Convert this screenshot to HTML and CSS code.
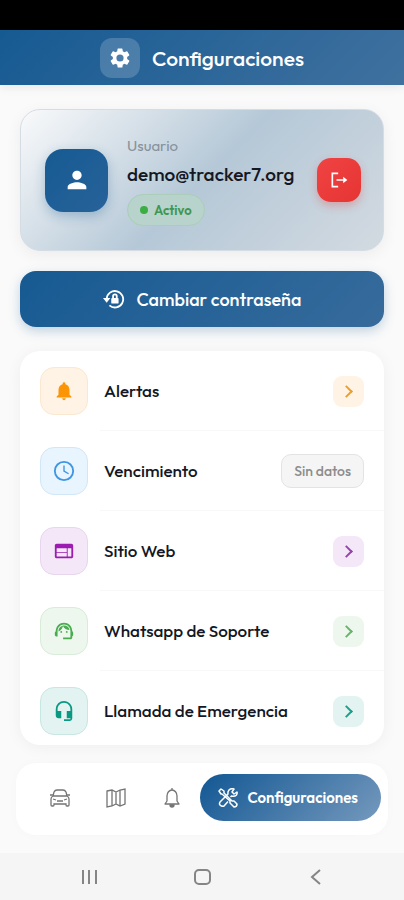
FILE: index.html
```html
<!DOCTYPE html>
<html lang="es">

<head>
    <title>Configuraciones</title>
    <meta charset="UTF-8">
    <meta name="viewport" content="width=device-width, initial-scale=1">
    <link rel="stylesheet" href="styles.css">
</head>

<body>
    <div class="status-bar"></div>

    <header class="header">
        <span class="header-icon">
            <svg width="24" height="24" viewBox="0 0 24 24" fill="currentColor"><path d="M19.14 12.94c.04-.3.06-.61.06-.94s-.02-.64-.07-.94l2.03-1.58a.5.5 0 0 0 .12-.61l-1.92-3.32a.5.5 0 0 0-.59-.22l-2.39.96a7 7 0 0 0-1.62-.94l-.36-2.54a.5.5 0 0 0-.48-.41h-3.84a.5.5 0 0 0-.47.41l-.36 2.54c-.59.24-1.13.57-1.62.94l-2.39-.96a.5.5 0 0 0-.59.22L2.74 8.87a.5.5 0 0 0 .12.61l2.03 1.58a6 6 0 0 0 0 1.88l-2.03 1.58a.5.5 0 0 0-.12.61l1.92 3.32c.12.22.37.29.59.22l2.39-.96c.5.38 1.03.7 1.62.94l.36 2.54c.05.24.24.41.48.41h3.84c.24 0 .44-.17.47-.41l.36-2.54c.59-.24 1.13-.56 1.62-.94l2.39.96c.22.08.47 0 .59-.22l1.92-3.32a.5.5 0 0 0-.12-.61zM12 15.6a3.6 3.6 0 1 1 0-7.2 3.6 3.6 0 0 1 0 7.2z"/></svg>
        </span>
        <h1>Configuraciones</h1>
    </header>

    <main class="content">
        <section class="profile">
            <div class="avatar">
                <svg width="32" height="32" viewBox="0 0 24 24" fill="currentColor"><path d="M12 12c2.21 0 4-1.79 4-4s-1.79-4-4-4-4 1.79-4 4 1.79 4 4 4zm0 2c-2.67 0-8 1.34-8 4v2h16v-2c0-2.66-5.33-4-8-4z"/></svg>
            </div>
            <div class="profile-info">
                <span class="profile-label">Usuario</span>
                <span class="profile-name">demo@tracker7.org</span>
                <span class="badge">Activo</span>
            </div>
            <button class="logout" type="button" aria-label="Salir">
                <svg width="20" height="20" viewBox="0 0 24 24" fill="none" stroke="currentColor" stroke-width="2"><path d="M11 4H4v16h7M9 12h10"/><path d="M17 8l5 4-5 4z" fill="currentColor" stroke="none"/></svg>
            </button>
        </section>

        <button class="password" type="button">
            <svg width="22" height="22" viewBox="0 0 24 24" fill="none" stroke="currentColor" stroke-width="2"><path d="M4 12a9 9 0 1 1 3 7"/><path d="M0 11h8l-4 5z" fill="currentColor" stroke="none"/><rect x="9" y="11" width="8" height="6" rx="1" fill="currentColor" stroke="none"/><path d="M11 11v-2a2 2 0 0 1 4 0v2"/></svg>
            Cambiar contraseña
        </button>

        <ul class="list">
            <li class="row orange">
                <span class="row-icon">
                    <svg width="24" height="24" viewBox="0 0 24 24" fill="currentColor"><path d="M12 22c1.1 0 2-.9 2-2h-4c0 1.1.9 2 2 2zm6-6v-5c0-3.07-1.64-5.64-4.5-6.32V4a1.5 1.5 0 0 0-3 0v.68C7.63 5.36 6 7.92 6 11v5l-2 2v1h16v-1l-2-2z"/></svg>
                </span>
                <a href="#">Alertas</a>
                <span class="arrow"></span>
            </li>
            <li class="row blue">
                <span class="row-icon">
                    <svg width="24" height="24" viewBox="0 0 24 24" fill="none" stroke="currentColor" stroke-width="2"><circle cx="12" cy="12" r="10"/><path d="M12 6v6l5 3" stroke-width="1.5"/></svg>
                </span>
                <span class="row-text">Vencimiento</span>
                <span class="chip">Sin datos</span>
            </li>
            <li class="row purple">
                <span class="row-icon">
                    <svg width="24" height="24" viewBox="0 0 24 24" fill="currentColor"><path d="M20 4H4c-1.1 0-2 .9-2 2v12c0 1.1.9 2 2 2h16c1.1 0 2-.9 2-2V6c0-1.1-.9-2-2-2zm-5 14H4v-4h11v4zm0-5H4V9h11v4zm5 5h-4V9h4v9z"/></svg>
                </span>
                <a href="#">Sitio Web</a>
                <span class="arrow"></span>
            </li>
            <li class="row green">
                <span class="row-icon">
                    <svg width="24" height="24" viewBox="0 0 24 24" fill="currentColor"><path d="M21 12.22C21 6.73 16.74 3 12 3c-4.69 0-9 3.65-9 9.28-.6.34-1 .98-1 1.72v2c0 1.1.9 2 2 2h1v-6.1c0-3.87 3.13-7 7-7s7 3.13 7 7V19h-8v2h8c1.1 0 2-.9 2-2v-1.22c.59-.31 1-.92 1-1.64v-2.3c0-.7-.41-1.31-1-1.62z"/><circle cx="9" cy="13" r="1"/><circle cx="15" cy="13" r="1"/><path d="M18 11.03A6.04 6.04 0 0 0 12.05 6c-3.03 0-6.29 2.51-6.03 6.45a8.07 8.07 0 0 0 4.86-5.89c1.31 2.63 4 4.44 7.12 4.47z"/></svg>
                </span>
                <a href="#">Whatsapp de Soporte</a>
                <span class="arrow"></span>
            </li>
            <li class="row teal">
                <span class="row-icon">
                    <svg width="24" height="24" viewBox="0 0 24 24" fill="currentColor"><path d="M12 1a9 9 0 0 0-9 9v7c0 1.66 1.34 3 3 3h3v-8H5v-2c0-3.87 3.13-7 7-7s7 3.13 7 7v2h-4v8h4v1h-7v2h6c1.66 0 3-1.34 3-3V10c0-4.97-4.03-9-9-9z"/></svg>
                </span>
                <a href="#">Llamada de Emergencia</a>
                <span class="arrow"></span>
            </li>
        </ul>
    </main>

    <nav class="tabs">
        <a class="tab" href="#" aria-label="Vehículos">
            <svg width="20" height="20" viewBox="0 0 20 20" fill="none" stroke="currentColor" stroke-width="1.3"><path d="M3 8l1-4q1-2 3-2h6q2 0 3 2l1 4M3 8h14q2 1 2 3v6q0 1-1 1h-1q-1 0-1-1v-1H4v1q0 1-1 1H2q-1 0-1-1v-6q0-2 2-3zM0 7h3M17 7h3M7 13h6M3 11l3 1M17 11l-3 1"/></svg>
        </a>
        <a class="tab" href="#" aria-label="Mapa">
            <svg width="20" height="20" viewBox="0 0 20 20" fill="none" stroke="currentColor" stroke-width="1.3"><path d="M1 3l5-1 4 2 4-2 5-1v15l-5 2-4-2-4 2-5 1zM6 2v16M10 4v12M14 2v16"/></svg>
        </a>
        <a class="tab" href="#" aria-label="Notificaciones">
            <svg width="20" height="20" viewBox="0 0 20 20" fill="none" stroke="currentColor" stroke-width="1.3"><path d="M10 0v2M3 16h14l-2-3V8a5 6 0 0 0-10 0v5z" stroke-linejoin="round"/><path d="M8 17h4q0 2-2 2t-2-2z" fill="currentColor"/></svg>
        </a>
        <a class="tab active" href="#">
            <svg width="20" height="20" viewBox="0 0 20 20" fill="none" stroke="currentColor" stroke-width="1.5" stroke-linejoin="round"><path d="M1 3l2-2 3 2v2l8 8h2l3 3q0 3-3 3l-4-4v-2L4 6H3z"/><path d="M12.5 9l1-1q3 1 5-1 1-2 .5-3l-3 2-2-2 2-3q-3-1-5 1-1.5 2-1 4l-8 8q-1 2 0 3 2 2 4 1l4-4.5"/></svg>
            Configuraciones
        </a>
    </nav>

    <footer class="system-bar">
        <svg width="24" height="24" viewBox="0 0 24 24"><path d="M6 5v14M12 5v14M19 5v14"/></svg>
        <svg width="24" height="24" viewBox="0 0 24 24"><rect x="5" y="5" width="15" height="14" rx="4"/></svg>
        <svg width="24" height="24" viewBox="0 0 24 24"><path d="M17 5l-8 7 8 7"/></svg>
    </footer>
</body>

</html>
```
FILE: styles.css
```css
* {
    box-sizing: border-box;
}

body {
    margin: 0;
    min-height: 100vh;
    display: flex;
    flex-direction: column;
    background-color: #fafafa;
    color: #141824;
    font-family: Outfit, Lato, sans-serif;
    font-size: 17px;
    line-height: 24px;
}

svg {
    display: block;
    flex: none;
}

a {
    color: inherit;
    text-decoration: none;
}

button {
    border: none;
    padding: 0;
    color: #fff;
    font-family: inherit;
    cursor: pointer;
}

.status-bar {
    height: 30px;
    background-color: #000;
}

/* Header */
.header {
    height: 55px;
    display: flex;
    align-items: center;
    justify-content: center;
    gap: 12px;
    color: #fff;
    background: linear-gradient(135deg, #165a92, #40719f);
    box-shadow: 0 2px 10px rgba(0, 0, 0, 0.08);
}

.header-icon {
    width: 40px;
    height: 40px;
    display: grid;
    place-items: center;
    border-radius: 12px;
    background-color: rgba(255, 255, 255, 0.18);
}

.header h1 {
    margin: 0;
    font-size: 21px;
    font-weight: 500;
}

.content {
    flex: 1;
    padding: 24px 20px 18px;
}

/* User card */
.profile {
    display: flex;
    align-items: center;
    min-height: 142px;
    padding: 0 22px 0 24px;
    border: 1px solid #d5dde4;
    border-radius: 20px;
    background: linear-gradient(135deg, #f9fafb 0%, #b5c8d7 50%, #d3dae1 100%);
    box-shadow: 0 4px 16px rgba(0, 0, 0, 0.06);
}

.avatar {
    width: 63px;
    height: 63px;
    flex: none;
    display: grid;
    place-items: center;
    border-radius: 18px;
    color: #fff;
    background: linear-gradient(135deg, #165a92, #28629a);
    box-shadow: 0 4px 12px rgba(22, 90, 146, 0.3);
}

.avatar svg {
    width: 28px;
    height: 28px;
}

.profile-info {
    flex: 1;
    display: flex;
    flex-direction: column;
    align-items: flex-start;
    margin-left: 19px;
}

.profile-label {
    color: #87919b;
    font-size: 15px;
}

.profile-name {
    margin: 4px 0 8px;
    font-size: 19px;
    font-weight: 500;
}

.badge {
    display: flex;
    align-items: center;
    gap: 6px;
    height: 32px;
    padding: 0 12px;
    border: 1px solid #accdb9;
    border-radius: 16px;
    color: #3f9650;
    background-color: #b7d3cb;
    font-size: 13px;
    font-weight: 600;
}

.badge::before {
    content: '';
    width: 8px;
    height: 8px;
    border-radius: 50%;
    background-color: #3bad42;
}

.logout {
    width: 44px;
    height: 44px;
    flex: none;
    display: grid;
    place-items: center;
    border-radius: 14px;
    background: linear-gradient(135deg, #f04343, #e53533);
    box-shadow: 0 4px 8px rgba(229, 57, 53, 0.3);
}

.password {
    width: 100%;
    height: 56px;
    margin: 20px 0 24px;
    display: flex;
    align-items: center;
    justify-content: center;
    gap: 12px;
    border-radius: 16px;
    background: linear-gradient(135deg, #165a92, #376b9c);
    box-shadow: 0 4px 12px rgba(22, 90, 146, 0.25);
    font-size: 18px;
    font-weight: 500;
}

/* Options */
.list {
    margin: 0;
    padding: 0;
    list-style: none;
    border-radius: 20px;
    background-color: #fff;
    box-shadow: 0 2px 16px rgba(0, 0, 0, 0.05);
}

.row {
    position: relative;
    display: flex;
    align-items: center;
    gap: 16px;
    padding: 16px 20px;
}

.row:last-child {
    padding-bottom: 10px;
}

.row a,
.row-text {
    flex: 1;
    font-weight: 500;
}

/* thin divider, starts where the text starts */
.row:not(:last-child)::after {
    content: '';
    position: absolute;
    left: 80px;
    right: 0;
    bottom: 0;
    border-bottom: 1px solid #f8f8f8;
}

.row-icon {
    width: 48px;
    height: 48px;
    flex: none;
    display: grid;
    place-items: center;
    border: 1px solid;
    border-radius: 14px;
}

.row-icon svg {
    width: 22px;
    height: 22px;
}

.arrow {
    width: 31px;
    height: 31px;
    flex: none;
    display: grid;
    place-items: center;
    border-radius: 9px;
}

.arrow::before {
    content: '';
    box-sizing: border-box;
    width: 9px;
    height: 9px;
    margin-right: 4px;
    border: solid;
    border-width: 2px 2px 0 0;
    transform: rotate(45deg);
}

.orange .row-icon, .orange .arrow {
    color: #fb9505;
    background-color: #fff3e5;
    border-color: #fbe8d0;
}

.blue .row-icon {
    color: #3c96e3;
    background-color: #e8f4fe;
    border-color: #d2e7f6;
}

.purple .row-icon, .purple .arrow {
    color: #9c1bb0;
    background-color: #f4e8f8;
    border-color: #e8d6ee;
}

.green .row-icon, .green .arrow {
    color: #49ad50;
    background-color: #edf7ee;
    border-color: #d8ecd9;
}

.teal .row-icon, .teal .arrow {
    color: #099982;
    background-color: #e2f3f1;
    border-color: #c9e7e2;
}

.orange .arrow::before {
    border-color: #e9a02f;
}

.purple .arrow::before {
    border-color: #9445ad;
}

.green .arrow::before {
    border-color: #69b36d;
}

.teal .arrow::before {
    border-color: #1c9e8b;
}

.chip {
    padding: 4px 12px;
    border: 1px solid #e3e3e3;
    border-radius: 10px;
    color: #8c8c8c;
    background-color: #f5f5f5;
    font-size: 14px;
    font-weight: 500;
}

/* Bottom tabs */
.tabs {
    display: flex;
    align-items: center;
    margin: 0 16px 18px;
    padding: 11px 7px 14px 16px;
    border-radius: 20px;
    background-color: #fff;
    box-shadow: 0 0 12px rgba(0, 0, 0, 0.02);
}

.tab {
    flex: 1;
    display: flex;
    align-items: center;
    justify-content: center;
    color: #747474;
}

.tab.active {
    flex: none;
    height: 47px;
    gap: 9px;
    padding: 0 23px 0 18px;
    border-radius: 24px;
    color: #fff;
    background: linear-gradient(135deg, #125793, #7599bd);
    font-size: 15px;
    font-weight: 600;
}

/* Phone buttons */
.system-bar {
    height: 47px;
    display: flex;
    align-items: center;
    justify-content: center;
    gap: 89px;
    background-color: #f5f5f5;
}

.system-bar svg {
    fill: none;
    stroke: #858585;
    stroke-width: 2;
}
```
